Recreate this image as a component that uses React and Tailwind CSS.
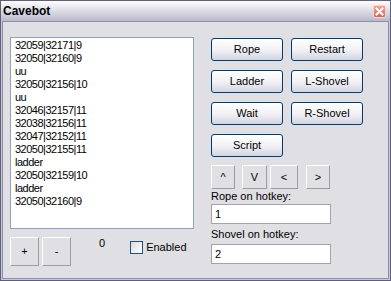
import React from 'react';

const font = { fontFamily: '"Liberation Sans", Arial, sans-serif' };

const lines = [
  '32059|32171|9',
  '32050|32160|9',
  'uu',
  '32050|32156|10',
  'uu',
  '32046|32157|11',
  '32038|32156|11',
  '32047|32152|11',
  '32050|32155|11',
  'ladder',
  '32050|32159|10',
  'ladder',
  '32050|32160|9',
];

// XP style push button
const XpButton = ({ children }) => (
  <button className="w-[72px] h-[23px] rounded-[3px] border border-[#003c74] bg-gradient-to-b from-white via-[#f2f2f6] to-[#d4d4e0] text-[11px] text-black flex items-center justify-center">
    {children}
  </button>
);

// flat classic button
const FlatButton = ({ w, h, className = '', children }) => (
  <button
    className={`${w} ${h} ${className} border border-t-white border-l-white border-b-[#9c9ca4] border-r-[#9c9ca4] bg-[#e0dfe4] text-[11px] text-black flex items-center justify-center`}
  >
    {children}
  </button>
);

export default function App() {
  return (
    <div className="w-[391px] h-[281px] bg-[#e0dfe4] border border-[#5f5f7d] flex flex-col overflow-hidden" style={font}>
      {/* title bar */}
      <div className="h-[20px] shrink-0 flex items-center justify-between pl-[2px] pr-[4px] bg-gradient-to-b from-[#fdfdfe] via-[#dcdce6] to-[#b9b9cc]">
        <span className="text-[12px] font-bold text-black leading-none">Cavebot</span>
        <div className="w-[13px] h-[13px] rounded-[2px] bg-gradient-to-b from-[#f4a192] to-[#e0604d] border border-[#fbd4cc] flex items-center justify-center">
          <svg width="9" height="9" viewBox="0 0 9 9">
            <path d="M1.5 1.5 L7.5 7.5 M7.5 1.5 L1.5 7.5" stroke="white" strokeWidth="2" strokeLinecap="square" />
          </svg>
        </div>
      </div>

      {/* client area */}
      <div className="flex-1 px-[1px] pb-[1px] bg-[#c9c9d6]">
        <div className="h-full border border-[#8e8ea6] bg-[#e0dfe4] pl-[7px] pt-[15px] flex">
          {/* left column */}
          <div className="w-[184px] flex flex-col">
            <div className="h-[192px] bg-white border border-[#8fa3ba] px-[4px] pt-[1px]">
              {lines.map((l, i) => (
                <div key={i} className="text-[11px] leading-[13px] tracking-[-0.5px] text-black">{l}</div>
              ))}
            </div>
            <div className="flex items-start mt-[8px]">
              <FlatButton w="w-[29px]" h="h-[29px]">+</FlatButton>
              <FlatButton w="w-[29px]" h="h-[29px]" className="ml-[3px]">-</FlatButton>
              <span className="ml-[28px] text-[11px] leading-[13px] text-black">0</span>
              <div className="ml-[25px] mt-[2px] flex items-center">
                <div className="w-[13px] h-[13px] border border-[#1c5180] bg-gradient-to-br from-[#dcdcd6] to-white" />
                <span className="ml-[3px] text-[11px] text-black">Enabled</span>
              </div>
            </div>
          </div>

          {/* right column */}
          <div className="ml-[17px] pt-[1px] flex flex-col">
            <div className="grid grid-cols-[72px_72px] gap-x-[8px] gap-y-[9px]">
              <XpButton>Rope</XpButton>
              <XpButton>Restart</XpButton>
              <XpButton>Ladder</XpButton>
              <XpButton>L-Shovel</XpButton>
              <XpButton>Wait</XpButton>
              <XpButton>R-Shovel</XpButton>
              <XpButton>Script</XpButton>
            </div>
            <div className="flex mt-[8px]">
              <FlatButton w="w-[24px]" h="h-[24px]">^</FlatButton>
              <FlatButton w="w-[25px]" h="h-[24px]" className="ml-[7px]">V</FlatButton>
              <FlatButton w="w-[28px]" h="h-[24px]" className="ml-[3px]">&lt;</FlatButton>
              <FlatButton w="w-[24px]" h="h-[24px]" className="ml-[8px]">&gt;</FlatButton>
            </div>
            <div className="text-[11px] leading-[16px] text-black mt-[-1px]">Rope on hotkey:</div>
            <div className="w-[120px] h-[20px] bg-white border border-[#a3a3ac] text-[11px] text-black pl-[3px] flex items-center">1</div>
            <div className="text-[11px] leading-[20px] text-black">Shovel on hotkey:</div>
            <div className="w-[120px] h-[20px] bg-white border border-[#a3a3ac] text-[11px] text-black pl-[3px] flex items-center">2</div>
          </div>
        </div>
      </div>
    </div>
  );
}
